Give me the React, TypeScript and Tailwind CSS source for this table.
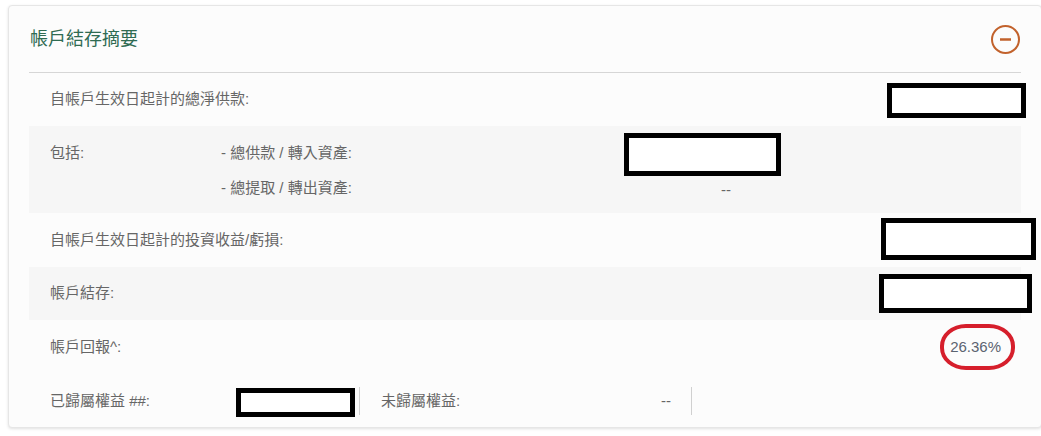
import React from "react";

const font = { fontFamily: '"Liberation Sans", "Noto Sans CJK TC", sans-serif' };

function Redact({ w, h, className = "" }: { w: string; h: string; className?: string }) {
  return <div className={`${w} ${h} border-[5px] border-black bg-white shrink-0 ${className}`} />;
}

export default function App() {
  return (
    <div className="w-full h-[436px] overflow-hidden bg-white" style={font}>
      <div className="ml-[8px] mt-[5px] w-[1034px] rounded-[4px] border border-[#e6e6e6] bg-[#fcfcfc] shadow-[0_1px_3px_rgba(0,0,0,0.12)]">
        {/* header */}
        <div className="flex items-center justify-between pl-[20px] pr-[19px] h-[66px]">
          <div className="text-[18px] text-[#2f6b52] pl-[1px] pt-[1px]">帳戶結存摘要</div>
          <svg width="31" height="31" viewBox="0 0 31 31" className="mr-[1px] mt-[1px]">
            <circle cx="15.5" cy="15.5" r="13.5" fill="none" stroke="#c2622c" strokeWidth="2" />
            <line x1="10" y1="15.5" x2="21" y2="15.5" stroke="#c2622c" strokeWidth="2.5" />
          </svg>
        </div>
        <div className="mx-[20px] border-t border-[#d6d6d6]">
          {/* row 1 */}
          <div className="flex items-center justify-between h-[53px] pl-[21px] text-[15px] text-[#666]">
            <span>自帳戶生效日起計的總淨供款:</span>
            <Redact w="w-[139px]" h="h-[35px]" className="mr-[-5px] mt-[2px]" />
          </div>
          {/* row 2 */}
          <div className="flex bg-[#f6f6f6] pt-[10px] pb-[7px] text-[15px] text-[#666]">
            <div className="w-[192px] pl-[21px] h-[35px] flex items-center">包括:</div>
            <div className="w-[403px]">
              <div className="h-[35px] flex items-center">- 總供款 / 轉入資產:</div>
              <div className="h-[35px] flex items-center">- 總提取 / 轉出資產:</div>
            </div>
            <div className="w-[157px]">
              <div className="h-[35px] flex items-center">
                <Redact w="w-[157px]" h="h-[43px]" className="mt-[2px]" />
              </div>
              <div className="h-[35px] flex items-center justify-end pr-[50px] pt-[3px]">--</div>
            </div>
          </div>
          {/* row 3 */}
          <div className="flex items-center justify-between h-[54px] pl-[21px] text-[15px] text-[#666]">
            <span>自帳戶生效日起計的投資收益/虧損:</span>
            <Redact w="w-[155px]" h="h-[42px]" className="mr-[-15px] mt-[-2px]" />
          </div>
          {/* row 4 */}
          <div className="flex items-center justify-between h-[53px] pl-[21px] bg-[#f6f6f6] text-[15px] text-[#666]">
            <span>帳戶結存:</span>
            <Redact w="w-[153px]" h="h-[39px]" className="mr-[-11px] mt-[-1px]" />
          </div>
          {/* row 5 */}
          <div className="flex items-center justify-between h-[55px] pl-[21px] pr-[20px] text-[15px] text-[#666]">
            <span>帳戶回報^:</span>
            <span className="relative text-[#5b6370]">
              26.36%
              <span className="absolute left-[-10px] top-[-12px] w-[75px] h-[46px] border-[4px] border-[#d61f2c] rounded-[26px/22px]" />
            </span>
          </div>
          {/* row 6 */}
          <div className="flex items-center h-[52px] text-[15px] text-[#666]">
            <div className="w-[207px] pl-[21px]">已歸屬權益 ##:</div>
            <Redact w="w-[119px]" h="h-[29px]" className="mt-[2px]" />
            <div className="ml-[4px] w-px h-[28px] bg-[#d0d0d0]" />
            <div className="ml-[21px] w-[290px] flex justify-between">
              <span>未歸屬權益:</span>
              <span>--</span>
            </div>
            <div className="ml-[20px] w-px h-[28px] bg-[#d0d0d0]" />
          </div>
        </div>
      </div>
    </div>
  );
}
